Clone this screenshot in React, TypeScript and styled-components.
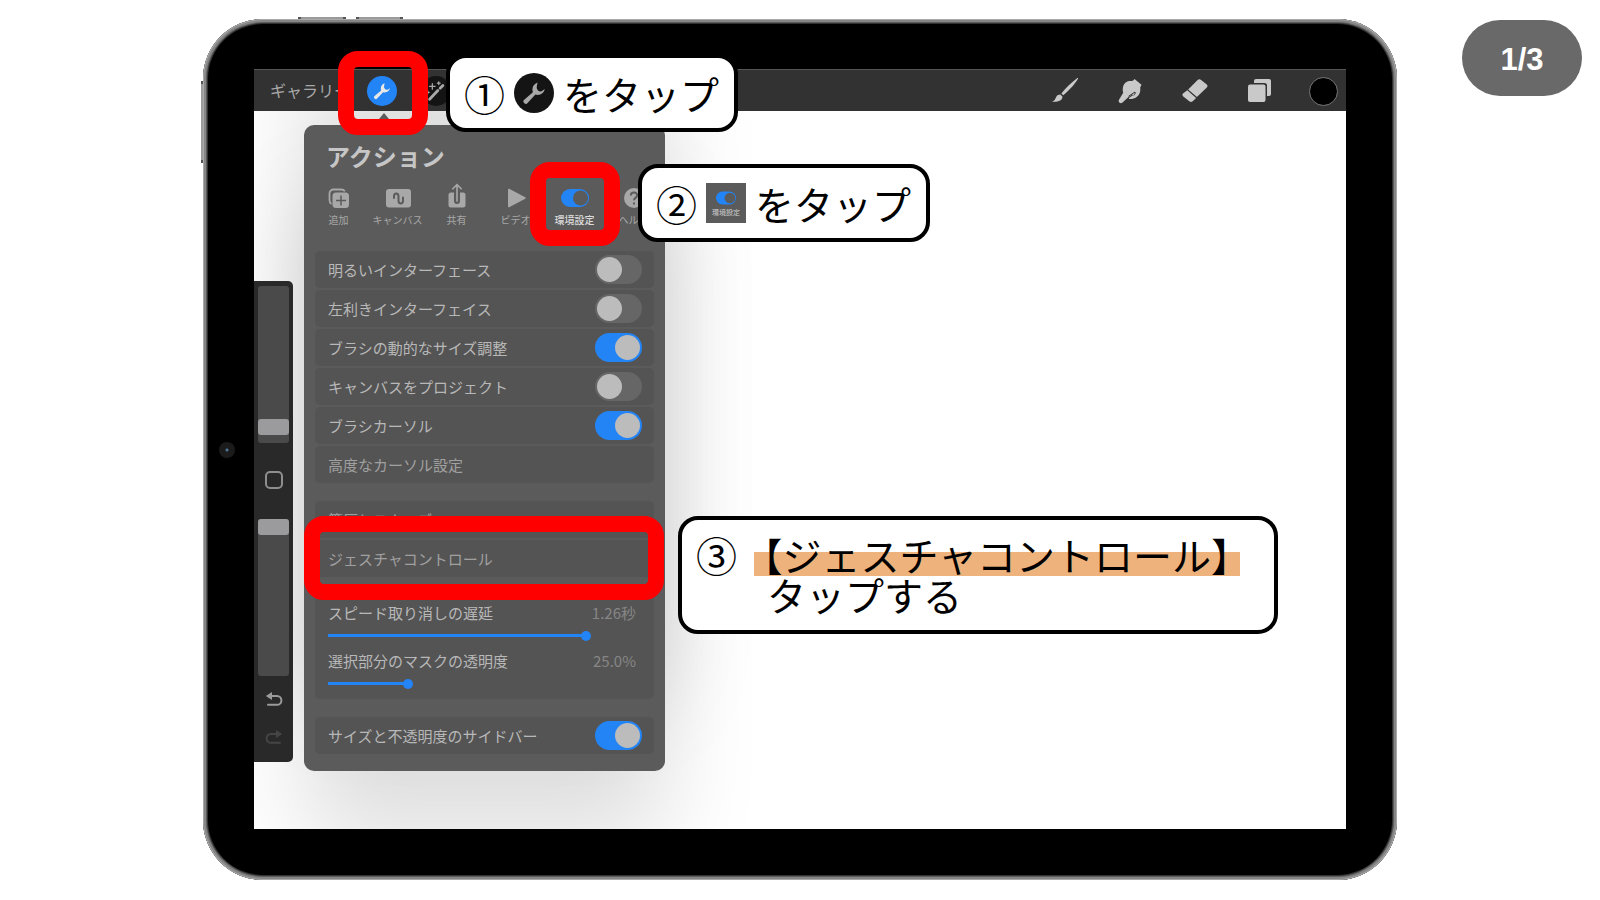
import React from "react";
import styled, { createGlobalStyle, css } from "styled-components";

const GlobalStyle = createGlobalStyle`
  * { box-sizing: border-box; }
  body {
    margin: 0;
    background: #fff;
    font-family: "Noto Sans CJK JP", "Liberation Sans", sans-serif;
  }
  button, input { font: inherit; color: inherit; margin: 0; }
  button { padding: 0; border: 0; background: none; cursor: pointer; }
`;

const BLUE = "#2384f6";

const Page = styled.main`
  position: relative;
  display: flex;
  min-height: 100vh;
  padding: 19px 203px 20px;
`;

const PageBadge = styled.div`
  position: absolute;
  top: 20px;
  right: 18px;
  width: 120px;
  height: 76px;
  padding-top: 22px;
  border-radius: 38px;
  background: #696969;
  color: #fff;
  font: bold 31px/36px "Liberation Sans", sans-serif;
  text-align: center;
`;

const Tablet = styled.div`
  position: relative;
  flex: 1;
  display: flex;
  padding: 50px 51px 51px;
  border-radius: 60px;
  background: #000;
  box-shadow: inset 0 0 0 1px #a9a9a9, inset 0 0 0 3px #858585,
    inset 0 0 0 4px #5c5c5c, inset 0 0 0 5px #303030;
`;

const HardwareKey = styled.span<{ $x: number; $y: number; $w: number; $h: number }>`
  position: absolute;
  left: ${(p) => p.$x}px;
  top: ${(p) => p.$y}px;
  width: ${(p) => p.$w}px;
  height: ${(p) => p.$h}px;
  background: #9a9a9a;
  border: 0 solid #555;
  border-width: ${(p) => (p.$w > p.$h ? "0 3px" : "3px 0")};
`;

const Camera = styled.span`
  position: absolute;
  left: 16px;
  top: 423px;
  width: 16px;
  height: 16px;
  border-radius: 50%;
  background: radial-gradient(circle, #4a7396 0 1px, #1b1b1b 2px 100%);
`;

const Screen = styled.div`
  position: relative;
  flex: 1;
  display: flex;
  flex-direction: column;
`;

const Toolbar = styled.header`
  display: flex;
  align-items: center;
  height: 42px;
  padding: 1px 8px 0 16px;
  border-top: 1px solid #555;
  background: #323232;
  color: #c9c9c9;
`;

const GalleryButton = styled.button`
  width: 97px;
  padding-bottom: 2px;
  text-align: left;
  color: #a8a8a8;
  font-size: 16px;
  line-height: 24px;
  white-space: nowrap;
`;

const RoundButton = styled.button<{ $active?: boolean }>`
  display: grid;
  place-items: center;
  width: 30px;
  height: 30px;
  margin-right: 24px;
  border-radius: 50%;
  background: ${(p) => (p.$active ? BLUE : "#141414")};
  color: ${(p) => (p.$active ? "#e8e8e8" : "#a8a8a8")};
`;

const Tools = styled.nav`
  display: flex;
  align-items: center;
  gap: 37px;
  margin-left: auto;
`;

const ToolButton = styled.button`
  display: grid;
  place-items: center;
  width: 28px;
  height: 28px;
`;

const ColorButton = styled.button`
  width: 29px;
  height: 29px;
  margin-left: -2px;
  border: 1px solid #7a7a7a;
  border-radius: 50%;
  background: #000;
`;

const Canvas = styled.div`
  flex: 1;
  display: flex;
  align-items: flex-start;
  gap: 11px;
  overflow: hidden;
  background: #fff;
`;

const SideBar = styled.aside`
  position: relative;
  z-index: 1;
  display: flex;
  flex-direction: column;
  align-items: center;
  width: 39px;
  height: 481px;
  margin-top: 170px;
  padding-top: 5px;
  border-radius: 0 5px 5px 0;
  background: #292929;
`;

const VerticalRange = styled.input`
  appearance: none;
  writing-mode: vertical-lr;
  direction: rtl;
  width: 31px;
  height: 157px;
  border-radius: 3px;
  background: #4a4a4a;
  &::-webkit-slider-thumb {
    appearance: none;
    width: 31px;
    height: 16px;
    border-radius: 3px;
    background: #9b9b9d;
  }
`;

const ModifyButton = styled.button`
  width: 18px;
  height: 18px;
  margin: 28px 0 30px;
  border: 2px solid #8e8e8e;
  border-radius: 5px;
`;

const HistoryButton = styled.button<{ $dim?: boolean }>`
  display: grid;
  place-items: center;
  width: 24px;
  height: 24px;
  margin-top: ${(p) => (p.$dim ? 14 : 11)}px;
  color: ${(p) => (p.$dim ? "#454545" : "#9a9a9a")};
`;

const Panel = styled.section`
  position: relative;
  width: 361px;
  margin-top: 14px;
  padding: 15px 11px 17px;
  border-radius: 10px;
  background: #5b5b5b;
  color: #b8b8b8;
  box-shadow: 0 -72px 96px rgba(0, 0, 0, 0.13), 0 72px 96px rgba(0, 0, 0, 0.13);
  &::before {
    content: "";
    position: absolute;
    left: 70px;
    top: -12px;
    border: 0 solid transparent;
    border-width: 0 10px 12px;
    border-bottom-color: #5b5b5b;
  }
`;

const PanelTitle = styled.h1`
  margin: 0 0 13px 11px;
  color: #c6c6c6;
  font-size: 24px;
  line-height: 32px;
  font-weight: bold;
`;

const Tabs = styled.div`
  display: grid;
  grid-template-columns: repeat(6, 59px);
  margin: 0 -6px 23px;
`;

const Tab = styled.button<{ $active?: boolean }>`
  display: flex;
  flex-direction: column;
  align-items: center;
  gap: 1px;
  color: ${(p) => (p.$active ? "#dcdcdc" : "#a8a8a8")};
  font-size: 10px;
  line-height: 16px;
  font-weight: ${(p) => (p.$active ? 500 : 400)};
  white-space: nowrap;
`;

const Group = styled.div`
  display: flex;
  flex-direction: column;
  gap: 2px;
  & + & { margin-top: 18px; }
`;

const rowStyle = css`
  display: flex;
  align-items: center;
  justify-content: space-between;
  width: 100%;
  height: 37px;
  padding: 0 12px 0 13px;
  border-radius: 5px;
  background: #545454;
  font-size: 15px;
  line-height: 20px;
`;

const SwitchRow = styled.label`
  ${rowStyle}
`;

const LinkRow = styled.button`
  ${rowStyle}
  color: #a0a0a0;
`;

const Switch = styled.input`
  appearance: none;
  width: 47px;
  height: 29px;
  padding: 2px;
  border-radius: 15px;
  background: #666;
  &::before {
    content: "";
    display: block;
    width: 25px;
    height: 25px;
    border-radius: 50%;
    background: #bcbcbc;
  }
  &:checked { background: ${BLUE}; }
  &:checked::before { margin-left: 18px; }
`;

const SliderCard = styled.div`
  padding: 7px 18px 4px 13px;
  border-radius: 5px;
  background: #545454;
`;

const SliderField = styled.label`
  display: grid;
  grid-template-columns: 1fr auto;
  font-size: 15px;
  line-height: 22px;
  & + & { margin-top: 3px; }
`;

const SliderValue = styled.output`
  color: #868686;
`;

const Range = styled.input<{ $fill: number }>`
  appearance: none;
  grid-column: 1 / -1;
  width: 100%;
  height: 23px;
  background: linear-gradient(${BLUE}, ${BLUE}) left center / ${(p) => p.$fill}% 3px no-repeat;
  &::-webkit-slider-thumb {
    appearance: none;
    width: 10px;
    height: 10px;
    border-radius: 50%;
    background: ${BLUE};
  }
`;

const Highlight = styled.div<{ $x: number; $y: number; $w: number }>`
  position: absolute;
  left: ${(p) => p.$x}px;
  top: ${(p) => p.$y}px;
  width: ${(p) => p.$w}px;
  height: 84px;
  border: 16px solid #f00;
  border-radius: 20px;
  pointer-events: none;
`;

const Callout = styled.div<{ $x: number; $y: number; $w: number }>`
  position: absolute;
  left: ${(p) => p.$x}px;
  top: ${(p) => p.$y}px;
  width: ${(p) => p.$w}px;
  min-height: 78px;
  display: flex;
  align-items: center;
  gap: 9px;
  padding: 14px;
  border: 4px solid #000;
  border-radius: 20px;
  background: #fff;
  color: #000;
  font-size: 39px;
  line-height: 40px;
  white-space: nowrap;
`;

const StepNumber = styled.span`
  font-size: 41px;
`;

const StepCallout = styled(Callout)`
  align-items: flex-start;
  gap: 17px;
  padding: 14px 14px 16px;
`;

const Instruction = styled.p`
  margin: 0;
`;

const Marked = styled.mark`
  display: block;
  margin-bottom: -2px;
  padding: 0 9px 2px;
  background: linear-gradient(#eeb37c, #eeb37c) left bottom / 100% 24px no-repeat;
  color: inherit;
  font-feature-settings: "halt";
`;

const SecondLine = styled.span`
  display: block;
  padding-left: 13px;
`;

const WrenchBadge = styled.span`
  display: grid;
  place-items: center;
  width: 40px;
  height: 40px;
  border-radius: 50%;
  background: #141414;
  color: #a8a8a8;
`;

const PrefsBadge = styled.span`
  display: flex;
  flex-direction: column;
  align-items: center;
  width: 40px;
  height: 40px;
  padding-top: 8px;
  background: #5b5b5b;
  color: #d0d0d0;
  font-size: 7px;
  line-height: 14px;
`;

const Wrench = ({ size }: { size: number }) => (
  <svg width={size} height={size} viewBox="0 0 24 24" fill="currentColor" aria-hidden="true">
    <path d="M15.500 1.500C11.400 3 9.400 7 10.900 11.200L2.500 18.400a2.400 2.400 0 1 0 3.300 3.400l7.600-8.200c4.400 1.200 8.400-1 9.400-5.500l-3.200 2.200c-3 .6-5.400-1.800-4.800-4.800z" />
  </svg>
);

const Wand = () => (
  <svg width="22" height="22" viewBox="0 0 24 24" fill="none" stroke="currentColor" strokeLinecap="round" aria-hidden="true">
    <path d="M5 21 14 11.500M16.500 9 19.500 6" strokeWidth="3" />
    <path d="M8 4v6M5 7h6M15 2v3M13.500 3.500h3M3 12v3M1.500 13.500h3" strokeWidth="1.400" />
  </svg>
);

const Brush = () => (
  <svg width="28" height="28" viewBox="0 0 28 28" fill="currentColor" aria-hidden="true">
    <path d="M27 1.800C27.500 1.200 26.700.800 26 1.300 20 5.800 14 12 10.400 16.600l1.800 1.600C17 14.500 23 8.500 27 1.800z" />
    <path d="M9.300 17.500l2.100 1.900c.3 3.600-4 5.900-10.400 5.400 3-1.100 3.100-2.800 4.300-5 .8-1.400 2.300-2.300 4-2.300z" />
  </svg>
);

const Smudge = () => (
  <svg width="28" height="28" viewBox="0 0 28 28" fill="currentColor" aria-hidden="true">
    <path d="M18.500 2l7 5.800-1.300 2.800c.6 4-.6 7.400-3.500 9.400-2 1.400-4.600 2.200-6.900 2.100-1-.1-1.200-1.100-.3-1.600l3.500-2.300-.5-.700-4 2.600-6 5.500c-2.400 1.700-4.800-.5-3.500-2.800l4.200-7.100c-1-3.300-.4-7.900 2.500-10.200 2.100-1.500 4.800-1.500 7.200-1.700z" />
    <path d="M12.500 19.300l6.500-4.300c.5 1.300-.1 2.500-1.400 3.300" fill="none" stroke="#323232" strokeWidth="1" />
  </svg>
);

const Eraser = () => (
  <svg width="28" height="28" viewBox="0 0 28 28" fill="currentColor" aria-hidden="true">
    <path d="M7.200 12.400 16.600 3a2.500 2.500 0 0 1 3.500 0l5.700 4.600a2 2 0 0 1 0 3l-9.900 9.400z" />
    <path d="M6.300 13.300l8.800 7.600-3.400 3.300a2.500 2.500 0 0 1-3.400 0L2 19.200a1.800 1.800 0 0 1 0-2.600z" />
  </svg>
);

const Layers = () => (
  <svg width="28" height="28" viewBox="0 0 28 28" fill="currentColor" aria-hidden="true">
    <path d="M10 2h13a2 2 0 0 1 2 2v13a2 2 0 0 1-2 2h-2V8.500a2.500 2.500 0 0 0-2.500-2.500H8V4a2 2 0 0 1 2-2z" />
    <rect x="2" y="7.500" width="17.500" height="17.500" rx="2" />
  </svg>
);

const Undo = ({ flip }: { flip?: boolean }) => (
  <svg width="18" height="16" viewBox="0 0 18 16" aria-hidden="true">
    <g transform={flip ? "matrix(-1 0 0 1 18 0)" : undefined}>
      <path d="M5 5h7a4.400 4.400 0 0 1 0 8.800H3" fill="none" stroke="currentColor" strokeWidth="2" strokeLinecap="round" />
      <path d="M7 1v8L.800 5z" fill="currentColor" />
    </g>
  </svg>
);

const AddIcon = () => (
  <svg width="26" height="26" viewBox="0 0 26 26" aria-hidden="true">
    <path d="M5.500 19C3.500 18 3.500 17 3.500 15V8.500a4 4 0 0 1 4-4H15c2 0 3 .2 3.800 1.800" fill="none" stroke="currentColor" strokeWidth="1.800" />
    <rect x="6.500" y="7.500" width="16.500" height="15.500" rx="3.500" fill="currentColor" />
    <path d="M15 10.500v10M10 15.500h10" stroke="#5b5b5b" strokeWidth="1.500" />
  </svg>
);

const CanvasIcon = () => (
  <svg width="26" height="26" viewBox="0 0 26 26" aria-hidden="true">
    <rect x="1" y="4" width="25" height="18.500" rx="3" fill="currentColor" />
    <path d="M9 13v-1.500c0-4 4.500-4 4.500 0v4c0 4 4.500 4 4.500 0V12.500" fill="none" stroke="#5b5b5b" strokeWidth="2" strokeLinecap="round" />
  </svg>
);

const ShareIcon = () => (
  <svg width="26" height="26" viewBox="0 0 26 26" overflow="visible" aria-hidden="true">
    <path d="M7 7.500h3V16a3 3 0 0 0 6 0V7.500h3a2.500 2.500 0 0 1 2.500 2.500v10a2.500 2.500 0 0 1-2.500 2.500H7A2.500 2.500 0 0 1 4.500 20V10A2.500 2.500 0 0 1 7 7.500z" fill="currentColor" />
    <path d="M13 16V0M8.800 3.800 13-.300l4.200 4.100" fill="none" stroke="currentColor" strokeWidth="1.600" strokeLinecap="round" />
  </svg>
);

const VideoIcon = () => (
  <svg width="26" height="26" viewBox="0 0 26 26" aria-hidden="true">
    <path d="M5 4.500c0-.8.600-1 1.200-.7l16 8.400c.7.400.7 1.200 0 1.600l-16 8.400c-.6.300-1.200.1-1.200-.7z" fill="currentColor" />
  </svg>
);

const PrefsIcon = ({ width = 28, height = 26 }: { width?: number; height?: number }) => (
  <svg width={width} height={height} viewBox="0 4 28 18" aria-hidden="true">
    <rect x="0" y="4" width="28" height="18" rx="9" fill={BLUE} />
    <circle cx="19.500" cy="13" r="7.500" fill="#5b5b5b" />
  </svg>
);

const HelpIcon = () => (
  <svg width="26" height="26" viewBox="0 0 26 26" aria-hidden="true">
    <circle cx="13" cy="13" r="10" fill="currentColor" />
    <path d="M9.800 10.500c0-4 6.400-4 6.400-.2 0 2.500-3.200 2.600-3.200 4.900M13 17.500v2" fill="none" stroke="#5b5b5b" strokeWidth="2" />
  </svg>
);

const tabs = [
  { label: "追加", icon: <AddIcon /> },
  { label: "キャンバス", icon: <CanvasIcon /> },
  { label: "共有", icon: <ShareIcon /> },
  { label: "ビデオ", icon: <VideoIcon /> },
  { label: "環境設定", icon: <PrefsIcon />, active: true },
  { label: "ヘルプ", icon: <HelpIcon /> },
];

const switches = [
  { label: "明るいインターフェース", on: false },
  { label: "左利きインターフェイス", on: false },
  { label: "ブラシの動的なサイズ調整", on: true },
  { label: "キャンバスをプロジェクト", on: false },
  { label: "ブラシカーソル", on: true },
];

const sliders = [
  { label: "スピード取り消しの遅延", value: "1.26秒", level: 85 },
  { label: "選択部分のマスクの透明度", value: "25.0%", level: 25 },
];

const ToggleItem = ({ label, on }: { label: string; on: boolean }) => (
  <SwitchRow>
    {label}
    <Switch type="checkbox" role="switch" defaultChecked={on} />
  </SwitchRow>
);

export default function App() {
  return (
    <Page>
      <GlobalStyle />
      <Tablet>
        <HardwareKey $x={95} $y={-2} $w={48} $h={2} />
        <HardwareKey $x={153} $y={-2} $w={47} $h={2} />
        <HardwareKey $x={-2} $y={62} $w={2} $h={82} />
        <Camera />
        <Screen>
          <Toolbar>
            <GalleryButton>ギャラリー</GalleryButton>
            <RoundButton $active aria-label="アクション"><Wrench size={18} /></RoundButton>
            <RoundButton aria-label="調整"><Wand /></RoundButton>
            <Tools>
              <ToolButton aria-label="ブラシ"><Brush /></ToolButton>
              <ToolButton aria-label="ぼかし"><Smudge /></ToolButton>
              <ToolButton aria-label="消しゴム"><Eraser /></ToolButton>
              <ToolButton aria-label="レイヤー"><Layers /></ToolButton>
              <ColorButton aria-label="カラー" />
            </Tools>
          </Toolbar>
          <Canvas>
            <SideBar>
              <VerticalRange type="range" defaultValue={6} aria-label="ブラシサイズ" />
              <ModifyButton aria-label="修正" />
              <VerticalRange type="range" defaultValue={100} aria-label="不透明度" />
              <HistoryButton aria-label="取り消す"><Undo /></HistoryButton>
              <HistoryButton $dim aria-label="やり直す"><Undo flip /></HistoryButton>
            </SideBar>
            <Panel>
              <PanelTitle>アクション</PanelTitle>
              <Tabs role="tablist">
                {tabs.map((t) => (
                  <Tab key={t.label} role="tab" aria-selected={!!t.active} $active={t.active}>
                    {t.icon}
                    {t.label}
                  </Tab>
                ))}
              </Tabs>
              <Group>
                {switches.map((s) => <ToggleItem key={s.label} {...s} />)}
                <LinkRow>高度なカーソル設定</LinkRow>
              </Group>
              <Group>
                <LinkRow>筆圧とスムーズ</LinkRow>
                <LinkRow>ジェスチャコントロール</LinkRow>
              </Group>
              <Group>
                <SliderCard>
                  {sliders.map((s) => (
                    <SliderField key={s.label}>
                      {s.label}
                      <SliderValue>{s.value}</SliderValue>
                      <Range type="range" defaultValue={s.level} $fill={s.level} />
                    </SliderField>
                  ))}
                </SliderCard>
              </Group>
              <Group>
                <ToggleItem label="サイズと不透明度のサイドバー" on />
              </Group>
            </Panel>
          </Canvas>
          <Highlight $x={84} $y={-18} $w={90} />
          <Highlight $x={276} $y={93} $w={90} />
          <Highlight $x={50} $y={447} $w={360} />
          <Callout $x={192} $y={-15} $w={292}>
            <StepNumber>①</StepNumber>
            <WrenchBadge><Wrench size={24} /></WrenchBadge>
            をタップ
          </Callout>
          <Callout $x={384} $y={95} $w={292}>
            <StepNumber>②</StepNumber>
            <PrefsBadge><PrefsIcon width={20} height={14} />環境設定</PrefsBadge>
            をタップ
          </Callout>
          <StepCallout $x={424} $y={447} $w={600}>
            <StepNumber>③</StepNumber>
            <Instruction>
              <Marked>【ジェスチャコントロール】</Marked>
              <SecondLine>タップする</SecondLine>
            </Instruction>
          </StepCallout>
        </Screen>
      </Tablet>
      <PageBadge>1/3</PageBadge>
    </Page>
  );
}
